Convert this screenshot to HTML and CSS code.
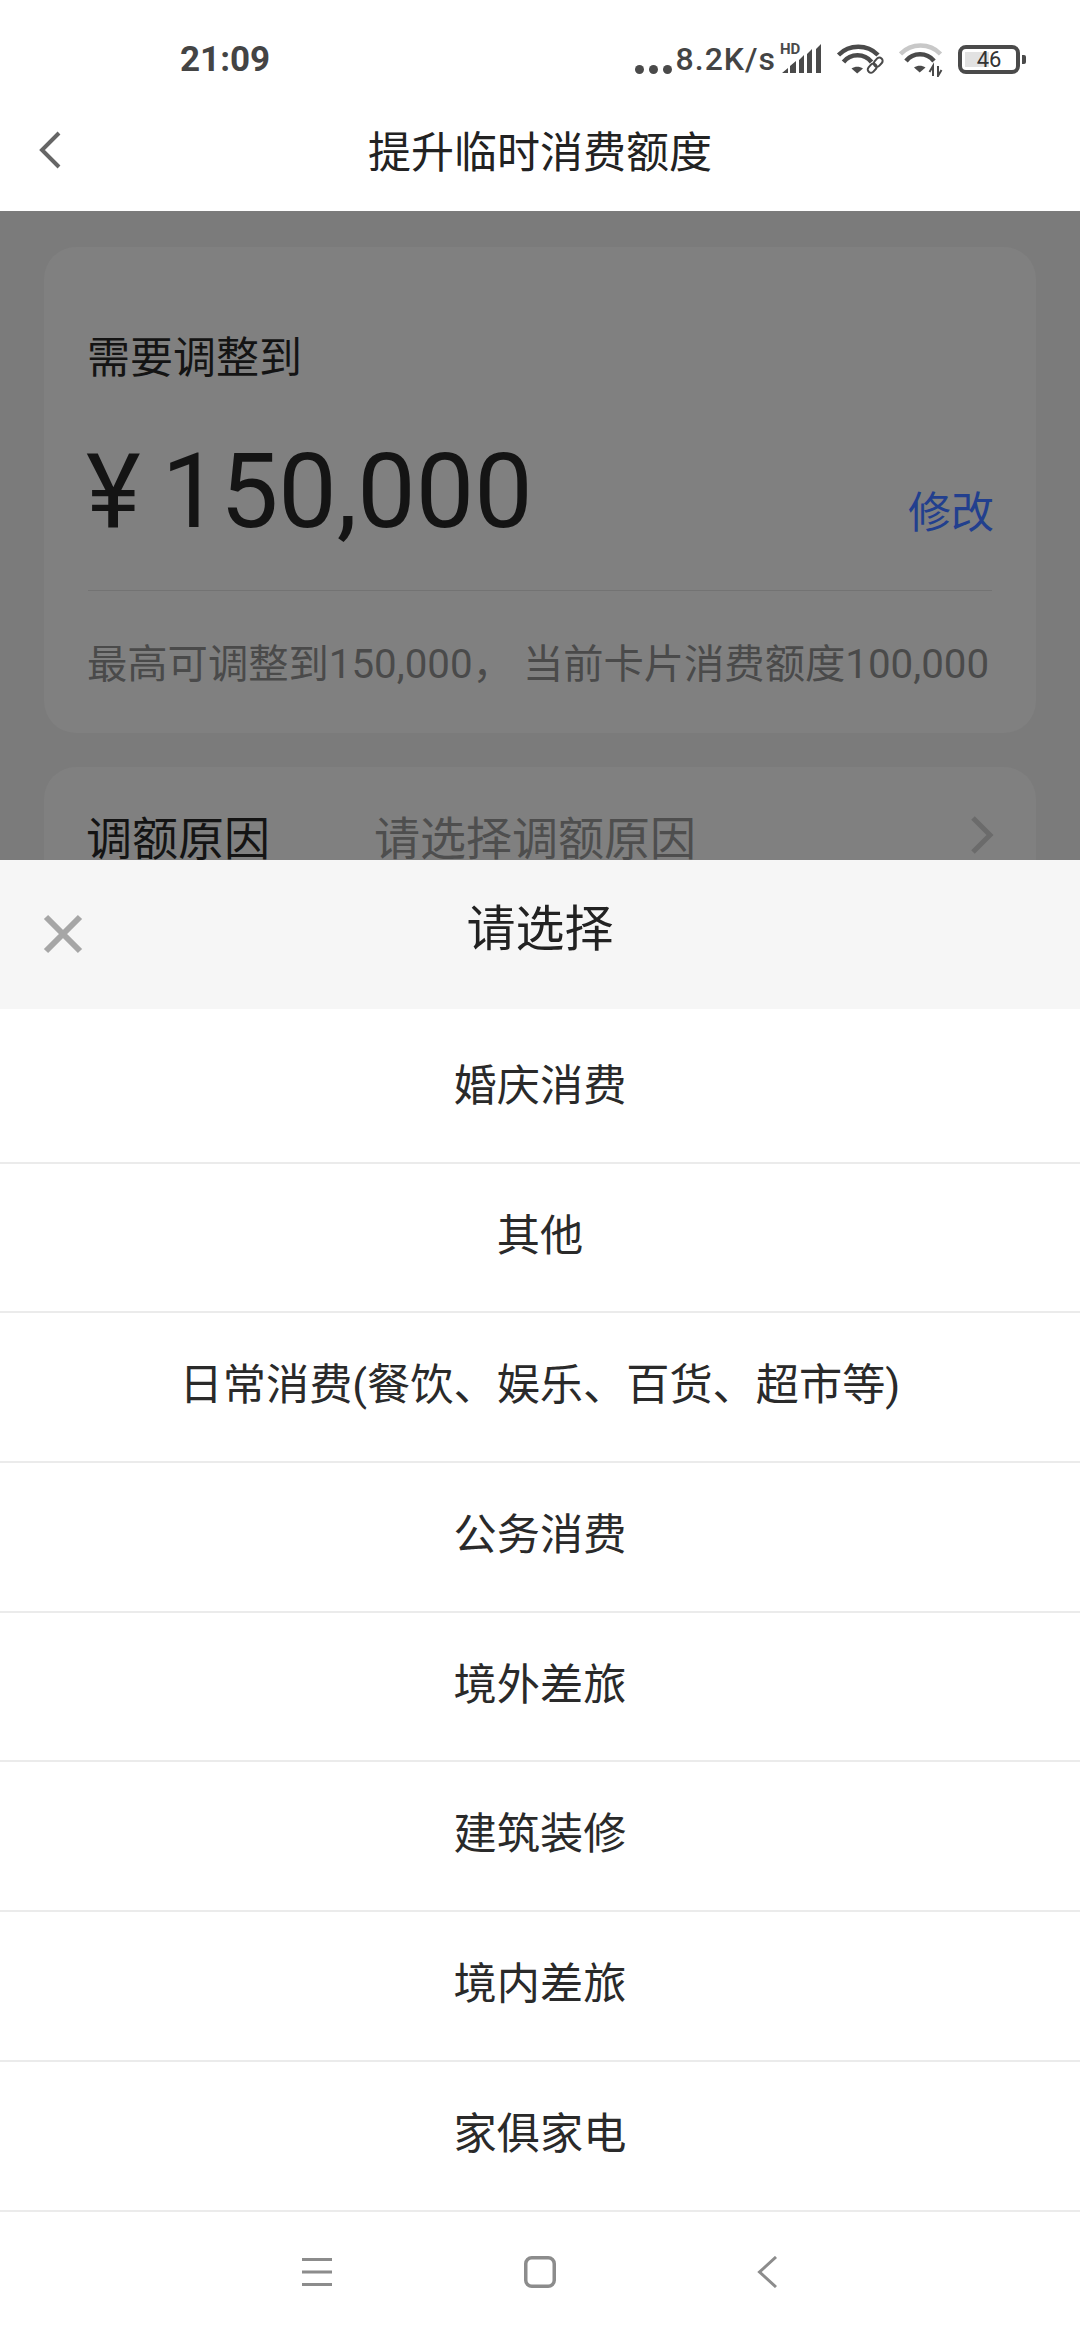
FILE: index.html
```html
<!DOCTYPE html>
<html lang="zh-CN">
<head>
    <meta charset="UTF-8">
    <meta name="viewport" content="width=device-width, initial-scale=1.0">
    <title>提升临时消费额度</title>
    <link rel="stylesheet" href="styles.css">
</head>
<body>

<div class="status-bar">
    <span class="clock">21:09</span>
    <div class="status-icons">
        <span class="dots"><i></i><i></i><i></i></span>
        <span class="speed">8.2K/s</span>
        <svg class="signal" width="42" height="38" viewBox="0 -4 42 38">
            <text x="0" y="12" class="hd">HD</text>
            <path d="M2 31l6-5v5zM10 24l6-5v12h-6zM19 18l5-5v18h-5zM27 12l5-5v24h-5zM36 7l5-5v29h-5z" fill="#4a4a4a"/>
        </svg>
        <svg class="wifi-link" width="48" height="34" viewBox="0 0 48 34">
            <g fill="none" stroke="#4a4a4a" stroke-width="4.500">
                <path d="M2.500 13A28 28 0 0 1 42 13"/>
                <path d="M7.500 20A18 18 0 0 1 35.500 20"/>
            </g>
            <path d="M15.500 26.500c3.500-2.500 8-2.500 11.500 0l-5.800 5z" fill="#4a4a4a"/>
            <g fill="none" stroke="#4a4a4a" stroke-width="2">
                <rect x="39" y="15" width="6.500" height="10" rx="3.200" transform="rotate(42 42 20)"/>
                <rect x="33" y="21" width="6.500" height="10" rx="3.200" transform="rotate(42 36 26)"/>
            </g>
        </svg>
        <svg class="wifi-data" width="44" height="36" viewBox="0 0 44 36">
            <path d="M1.500 13A28 28 0 0 1 41.500 13" fill="none" stroke="#c8c8c8" stroke-width="4.500"/>
            <path d="M7 20A18 18 0 0 1 35 20" fill="none" stroke="#4a4a4a" stroke-width="4.500"/>
            <path d="M15 26.500c3.500-2.500 8-2.500 11.500 0l-5.800 5z" fill="#4a4a4a"/>
            <path d="M34 35V25l-3.500 6M39 25v10l3.500-6" fill="none" stroke="#4a4a4a" stroke-width="2"/>
        </svg>
        <div class="battery">
            <div class="battery-body">
                <span class="battery-fill"></span>
                <span class="battery-level">46</span>
            </div>
            <span class="battery-tip"></span>
        </div>
    </div>
</div>

<header class="title-bar">
    <svg class="back" width="24" height="40" viewBox="0 0 24 40">
        <path d="M21 3L4 20l17 17" fill="none" stroke="#666" stroke-width="4"/>
    </svg>
    <h1>提升临时消费额度</h1>
</header>

<main class="behind">
    <section class="card amount-card">
        <p class="card-label">需要调整到</p>
        <div class="amount-row">
            <span class="amount">¥ 150,000</span>
            <a class="edit">修改</a>
        </div>
        <p class="limit-note">最高可调整到150,000， 当前卡片消费额度100,000</p>
    </section>
    <section class="card reason-card">
        <span class="reason-label">调额原因</span>
        <span class="reason-value">请选择调额原因</span>
        <svg class="chevron" width="24" height="40" viewBox="0 0 24 40">
            <path d="M3 3l17 17L3 37" fill="none" stroke="#6b6b6b" stroke-width="5"/>
        </svg>
    </section>
</main>

<section class="sheet">
    <div class="sheet-head">
        <svg class="close" width="40" height="40" viewBox="0 0 40 40">
            <path d="M3 3l34 34M37 3L3 37" fill="none" stroke="#a6a6a6" stroke-width="6"/>
        </svg>
        <h2>请选择</h2>
    </div>
    <ul class="options">
        <li>婚庆消费</li>
        <li>其他</li>
        <li>日常消费(餐饮、娱乐、百货、超市等)</li>
        <li>公务消费</li>
        <li>境外差旅</li>
        <li>建筑装修</li>
        <li>境内差旅</li>
        <li>家俱家电</li>
    </ul>
</section>

<nav class="nav-bar">
    <svg width="30" height="28" viewBox="0 0 30 28">
        <path d="M0 1.500h30M0 14h30M0 26.500h30" fill="none" stroke="#8c8c8c" stroke-width="3"/>
    </svg>
    <svg class="nav-home" width="32" height="32" viewBox="0 0 32 32">
        <rect x="1.750" y="1.750" width="28.500" height="28.500" rx="6" fill="none" stroke="#8c8c8c" stroke-width="3.500"/>
    </svg>
    <svg width="20" height="32" viewBox="0 0 20 32">
        <path d="M19 1L2.500 16 19 31" fill="none" stroke="#8c8c8c" stroke-width="3"/>
    </svg>
</nav>

</body>
</html>
```

FILE: styles.css
```css
* {
    box-sizing: border-box;
}
html, body {
    margin: 0;
    padding: 0;
}
body {
    width: 1080px;
    height: 2340px;
    overflow: hidden;
    display: flex;
    flex-direction: column;
    background: #fff;
    color: #222;
    font-family: Roboto, "Noto Sans CJK SC", sans-serif;
}
h1, h2, p, ul {
    margin: 0;
    padding: 0;
    font-weight: normal;
}

/* status bar */
.status-bar {
    height: 100px;
    flex: none;
    display: flex;
    justify-content: space-between;
    align-items: center;
    padding: 18px 54px 0 180px;
    color: #444;
}
.clock {
    font-size: 35px;
    font-weight: 700;
}
.status-icons {
    display: flex;
    align-items: center;
}
.dots {
    display: flex;
    gap: 5px;
    margin: 20px 4px 0 0;
}
.dots i {
    width: 9px;
    height: 9px;
    border-radius: 50%;
    background: #4a4a4a;
}
.speed {
    font-size: 32px;
    font-weight: 500;
    letter-spacing: 1px;
}
.signal {
    margin: -4px 0 0 4px;
}
.hd {
    font: 700 15px Roboto, sans-serif;
    fill: #4a4a4a;
}
.wifi-link {
    margin-left: 14px;
}
.wifi-data {
    margin-left: 15px;
}
.battery {
    display: flex;
    align-items: center;
    margin-left: 15px;
}
.battery-body {
    position: relative;
    width: 62px;
    height: 29px;
    border: 4px solid #4a4a4a;
    border-radius: 8px;
    display: flex;
    align-items: center;
    justify-content: center;
}
.battery-fill {
    position: absolute;
    left: 3px;
    top: 3px;
    bottom: 3px;
    width: 24px;
    background: #e2e2e2;
}
.battery-level {
    position: relative;
    font-size: 22px;
    color: #333;
}
.battery-tip {
    width: 4px;
    height: 9px;
    margin-left: 2px;
    border-radius: 0 2px 2px 0;
    background: #4a4a4a;
}

/* title bar */
.title-bar {
    position: relative;
    height: 111px;
    flex: none;
    display: flex;
    align-items: center;
    justify-content: center;
    padding-bottom: 14px;
}
.title-bar h1 {
    font-size: 43px;
}
.back {
    position: absolute;
    left: 38px;
    top: 30px;
}

/* page under the dim layer */
.behind {
    height: 649px;
    flex: none;
    overflow: hidden;
    padding: 36px 44px 0;
    background: #7b7b7b;
    color: #141414;
}
.card {
    background: #808080;
    border-radius: 32px;
}
.amount-card {
    height: 486px;
    padding: 0 44px;
    margin-bottom: 34px;
}
.card-label {
    padding-top: 81px;
    margin-left: -1px;
    font-size: 43px;
    line-height: 60px;
}
.amount-row {
    height: 203px;
    display: flex;
    justify-content: space-between;
    border-bottom: 1px solid #737373;
}
.amount {
    padding-top: 44px;
    margin-left: -2px;
    font-size: 104px;
    line-height: 120px;
    word-spacing: -5px;
}
.edit {
    padding-top: 95px;
    margin-right: -2px;
    font-size: 43px;
    line-height: 60px;
    color: #223f8e;
}
.limit-note {
    padding-top: 44px;
    margin-left: -1px;
    font-size: 40.3px;
    line-height: 60px;
    white-space: nowrap;
    color: #4a4a4a;
}
.reason-card {
    height: 200px;
    display: flex;
    align-items: flex-start;
    padding: 42px 44px 0;
    font-size: 46px;
    line-height: 60px;
}
.reason-label {
    width: 288px;
    margin-left: -2px;
}
.reason-value {
    flex: 1;
    color: #4e4e4e;
}
.chevron {
    margin: 6px -2px 0 0;
}

/* picker sheet */
.sheet {
    flex: 1;
    display: flex;
    flex-direction: column;
    background: #fff;
}
.sheet-head {
    position: relative;
    height: 149px;
    flex: none;
    display: flex;
    justify-content: center;
    padding-top: 40px;
    background: #f6f6f6;
}
.sheet-head h2 {
    font-size: 49px;
    line-height: 60px;
}
.close {
    position: absolute;
    left: 43px;
    top: 54px;
}
.options {
    list-style: none;
    padding-top: 5px;
}
.options li {
    height: 149.7px;
    display: flex;
    align-items: center;
    justify-content: center;
    padding-bottom: 12px;
    font-size: 43.200px;
    color: #2a2a2a;
    border-bottom: 2px solid #ebebeb;
}

/* system navigation */
.nav-bar {
    height: 128px;
    flex: none;
    display: flex;
    align-items: center;
    gap: 192px;
    padding: 0 0 8px 302px;
}
.nav-home {
    margin-right: 9px;
}
```
